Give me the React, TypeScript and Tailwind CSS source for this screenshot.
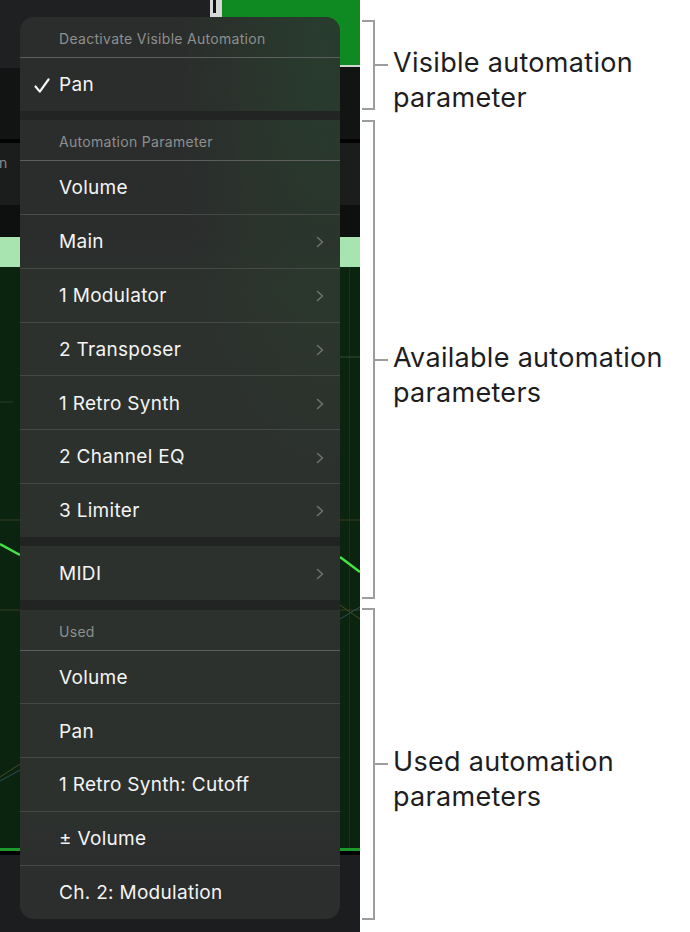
import React from 'react'

const font = "font-['Inter','Noto_Sans',sans-serif]"

interface RowProps {
    label: string
    chevron?: boolean
    check?: boolean
    first?: boolean
}

const Chevron = () => (
    <svg width="8" height="12" viewBox="0 0 8 12" className="shrink-0">
        <path d="M1.5 1.5 L6.5 6 L1.5 10.5" fill="none" stroke="#6e716f" strokeWidth="1.6" strokeLinecap="round" strokeLinejoin="round" />
    </svg>
)

const Check = () => (
    <svg width="16" height="16" viewBox="0 0 16 16" className="absolute left-[14px] top-[20px]">
        <path d="M1.5 8.5 L5.8 13.6 L14.5 1.5" fill="none" stroke="#f4f4f4" strokeWidth="2.2" strokeLinecap="round" strokeLinejoin="round" />
    </svg>
)

const Row: React.FC<RowProps> = ({label, chevron, check, first}) => (
    <div className={`relative flex h-[53.8px] items-center justify-between border-t pl-[39px] pr-[16px] pt-[2px] text-[19px] tracking-[0.3px] text-[#f4f4f4] ${first ? 'border-[#5c5f5d]' : 'border-[#464a47]'}`}>
        {check && <Check />}
        <span>{label}</span>
        {chevron && <Chevron />}
    </div>
)

const Header = ({label}: {label: string}) => (
    <div className="flex h-[40px] items-center pl-[39px] pt-[3px] text-[14px] tracking-[0.3px] text-[#8d908e]">{label}</div>
)

const Gap = () => <div className="h-[9.5px] bg-[#222423]" />

const Menu = () => (
    <div className="absolute left-[20px] top-[17px] w-[320px] overflow-hidden rounded-[14px] bg-[linear-gradient(180deg,#2b2c2c_0%,#2b2d2c_24%,#2c312d_30%,#2c312e_88%,#2c2d2d_95%)]">
        <div className="pointer-events-none absolute inset-0 bg-[radial-gradient(ellipse_at_95%_0%,rgba(30,120,50,0.22),transparent_35%)]" />
        <div className="relative">
            <Header label="Deactivate Visible Automation" />
            <Row label="Pan" check first />
            <Gap />
            <Header label="Automation Parameter" />
            <Row label="Volume" first />
            <Row label="Main" chevron />
            <Row label="1 Modulator" chevron />
            <Row label="2 Transposer" chevron />
            <Row label="1 Retro Synth" chevron />
            <Row label="2 Channel EQ" chevron />
            <Row label="3 Limiter" chevron />
            <Gap />
            <div className="flex h-[53.8px] items-center justify-between pl-[39px] pr-[16px] pt-[2px] text-[19px] tracking-[0.3px] text-[#f4f4f4]">
                <span>MIDI</span>
                <Chevron />
            </div>
            <Gap />
            <Header label="Used" />
            <Row label="Volume" first />
            <Row label="Pan" />
            <Row label="1 Retro Synth: Cutoff" />
            <Row label="± Volume" />
            <Row label="Ch. 2: Modulation" />
        </div>
    </div>
)

const Track = () => (
    <div className="relative h-[932px] w-[360px] shrink-0 overflow-hidden bg-[#0a2410]">
        <div className="flex h-full flex-col">
            <div className="flex h-[68px]">
                <div className="flex-1 bg-[#1f2021]" />
                <div className="w-[12px] bg-[#1f2021]">
                    <div className="flex h-[17px] bg-[#d6d7d6] pl-[3px]">
                        <div className="h-[13px] w-[3px] bg-[#111]" />
                    </div>
                </div>
                <div className="flex w-[138px] flex-col bg-[#121313]">
                    <div className="h-[65px] bg-[#0f8a22]" />
                    <div className="h-[2px] bg-[#cfd6cf]" />
                </div>
            </div>
            <div className="h-[71px] bg-[#121313]" />
            <div className="h-[4px] bg-[#030303]" />
            <div className="h-[62px] bg-[#1b1c1c] pt-[10px]">
                <span className="-ml-[1px] block text-[14px] leading-[20px] text-[#8b8b8b]">n</span>
            </div>
            <div className="h-[32px] bg-[#0e0f0f]" />
            <div className="h-[30px] bg-[#a7e4b0]" />
            <div className="relative flex-1">
                <svg className="absolute inset-0" width="360" height="581" viewBox="0 0 360 581">
                    <line x1="349.5" y1="0" x2="349.5" y2="581" stroke="#143319" strokeWidth="1" />
                    <line x1="340" y1="90" x2="360" y2="90" stroke="#2f4d33" strokeWidth="1" />
                    <line x1="0" y1="135" x2="13" y2="135" stroke="#22452a" strokeWidth="1" />
                    <line x1="0" y1="253" x2="360" y2="253" stroke="#3a3d1e" strokeWidth="1" />
                    <line x1="0" y1="343" x2="360" y2="343" stroke="#3a3d1e" strokeWidth="1" />
                    <line x1="0" y1="277" x2="20" y2="288" stroke="#43e443" strokeWidth="2.5" />
                    <line x1="340" y1="290" x2="360" y2="305" stroke="#43e443" strokeWidth="2.5" />
                    <line x1="340" y1="352" x2="360" y2="340" stroke="#2e4f5a" strokeWidth="1" />
                    <line x1="340" y1="338" x2="360" y2="352" stroke="#4a4a22" strokeWidth="1" />
                    <line x1="0" y1="510" x2="20" y2="497" stroke="#4a4a22" strokeWidth="1" />
                    <line x1="0" y1="514" x2="20" y2="503" stroke="#2e4f5a" strokeWidth="1" />
                </svg>
            </div>
            <div className="h-[3px] bg-[#1c9a2c]" />
            <div className="h-[4px] bg-[#030303]" />
            <div className="h-[77px] bg-[#1c1d1e]" />
        </div>
        <Menu />
    </div>
)

interface CalloutProps {
    wrap: string
    lines: string[]
}

const Callout: React.FC<CalloutProps> = ({wrap, lines}) => (
    <div className={`flex items-center ${wrap}`}>
        <div className="h-full w-[13px] border-y-2 border-r-2 border-[#9d9d9d]" />
        <div className="h-[2px] w-[13px] bg-[#9d9d9d]" />
        <div className="-mt-[5px] ml-[5px] h-[35px] whitespace-nowrap text-[27px] leading-[35px] tracking-[0.3px] text-[#1d1d1f]">
            {lines.map(line => <div key={line}>{line}</div>)}
        </div>
    </div>
)

const App = () => (
    <div className={`flex h-[932px] w-[690px] overflow-hidden bg-white ${font}`}>
        <Track />
        <div className="flex flex-1 flex-col pl-[2px] pt-[20px]">
            <Callout wrap="h-[90px]" lines={['Visible automation', 'parameter']} />
            <Callout wrap="mt-[10px] h-[479px]" lines={['Available automation', 'parameters']} />
            <Callout wrap="mt-[9px] h-[312px]" lines={['Used automation', 'parameters']} />
        </div>
    </div>
)

export default App
